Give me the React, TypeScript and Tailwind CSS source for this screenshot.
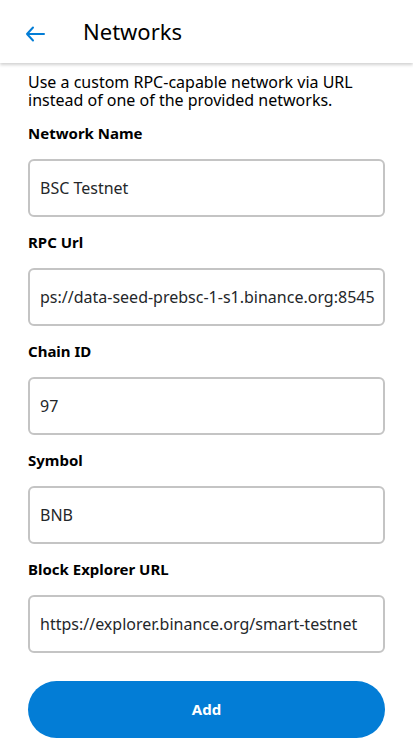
import React from 'react';

const FONT = { fontFamily: '"Noto Sans", "Liberation Sans", sans-serif' };

type Field = { label: string; value: string };

// RPC url is shown the way the field scrolls it: start cut off, end visible
const FIELDS: Field[] = [
  { label: 'Network Name', value: 'BSC Testnet' },
  { label: 'RPC Url', value: 'ps://data-seed-prebsc-1-s1.binance.org:8545' },
  { label: 'Chain ID', value: '97' },
  { label: 'Symbol', value: 'BNB' },
  { label: 'Block Explorer URL', value: 'https://explorer.binance.org/smart-testnet' },
];

export default function App() {
  return (
    <div className="w-[413px] h-[750px] bg-white overflow-hidden text-[#24272a]" style={FONT}>
      {/* Header */}
      <div className="h-[63px] flex items-center shadow-[0_2px_3px_rgba(0,0,0,0.18)] relative z-10">
        <button className="w-[70px] pl-[25px] pt-[4px] flex items-center">
          <svg width="20" height="16" viewBox="0 0 20 16" fill="none">
            <path d="M19 8H2M8 1.5L2 8l6 6.5" stroke="#037dd6" strokeWidth="2" strokeLinecap="round" strokeLinejoin="round" />
          </svg>
        </button>
        <h1 className="ml-[13px] text-[22px] leading-none text-black pb-[2px]">Networks</h1>
      </div>

      {/* Content */}
      <div className="px-[28px] pt-[10px]">
        <p className="text-[16px] leading-[18px] text-black">
          Use a custom RPC-capable network via URL instead of one of the provided networks.
        </p>

        <div className="mt-[14px] flex flex-col gap-[15px]">
          {FIELDS.map((f) => (
            <div key={f.label} className="flex flex-col">
              <label className="text-[15px] leading-[20px] font-bold text-black">{f.label}</label>
              <div className="mt-[16px] h-[58px] border-2 border-[#c4c4c4] rounded-[6px] px-[10px] flex items-center whitespace-nowrap text-[16px] text-[#24272a]">
                {f.value}
              </div>
            </div>
          ))}
        </div>

        <button className="mt-[28px] w-full h-[57px] rounded-full bg-[#037dd6] text-white text-[15px] font-bold">
          Add
        </button>
      </div>
    </div>
  );
}
